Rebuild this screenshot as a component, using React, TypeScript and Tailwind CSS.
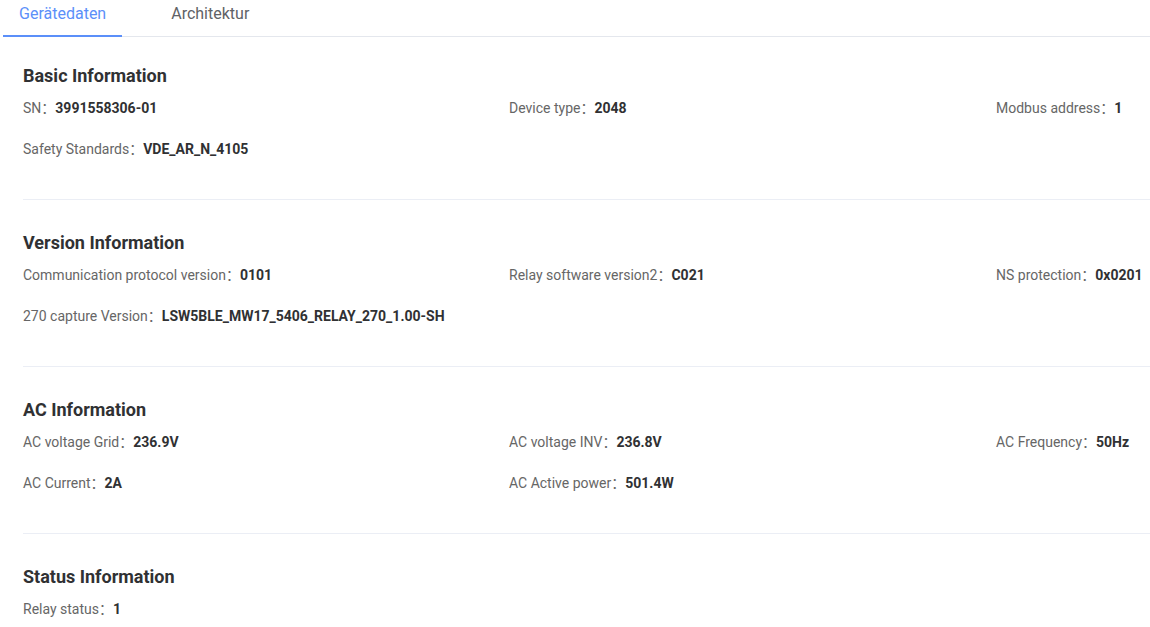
import React, { useState } from 'react';

type Field = { label: string; value: string };
type Section = { title: string; rows: Field[][] };

const sections: Section[] = [
  {
    title: 'Basic Information',
    rows: [
      [
        { label: 'SN', value: '3991558306-01' },
        { label: 'Device type', value: '2048' },
        { label: 'Modbus address', value: '1' },
      ],
      [{ label: 'Safety Standards', value: 'VDE_AR_N_4105' }],
    ],
  },
  {
    title: 'Version Information',
    rows: [
      [
        { label: 'Communication protocol version', value: '0101' },
        { label: 'Relay software version2', value: 'C021' },
        { label: 'NS protection', value: '0x0201' },
      ],
      [{ label: '270 capture Version', value: 'LSW5BLE_MW17_5406_RELAY_270_1.00-SH' }],
    ],
  },
  {
    title: 'AC Information',
    rows: [
      [
        { label: 'AC voltage Grid', value: '236.9V' },
        { label: 'AC voltage INV', value: '236.8V' },
        { label: 'AC Frequency', value: '50Hz' },
      ],
      [
        { label: 'AC Current', value: '2A' },
        { label: 'AC Active power', value: '501.4W' },
      ],
    ],
  },
  {
    title: 'Status Information',
    rows: [[{ label: 'Relay status', value: '1' }]],
  },
];

const tabs = ['Gerätedaten', 'Architektur'];

const App: React.FC = () => {
  const [active, setActive] = useState(0);

  return (
    <div
      className="w-full h-[627px] overflow-hidden bg-white"
      style={{ fontFamily: 'Roboto, "Noto Sans CJK SC", sans-serif' }}
    >
      <div className="w-[1500px]">
        {/* tabs */}
        <div className="ml-[3px] flex border-b border-[#e4e7ed]">
          {tabs.map((t, i) => (
            <button
              key={t}
              onClick={() => setActive(i)}
              className={`relative px-4 pt-[4px] pb-[12px] text-base leading-5 ${
                i === 1 ? 'ml-[33px]' : ''
              } ${active === i ? 'text-[#5b8ff9]' : 'text-[#606266]'}`}
            >
              {t}
              {active === i && (
                <span className="absolute left-0 right-0 bottom-[-1px] h-[2px] bg-[#5b8ff9]"></span>
              )}
            </button>
          ))}
        </div>

        {/* sections */}
        <div className="ml-[23px]">
          {sections.map((s, idx) => (
            <div
              key={s.title}
              className={`${idx === 0 ? 'pt-[27px]' : 'pt-[31px]'} pb-[40px] ${
                idx < sections.length - 1 ? 'border-b border-[#ebeef5]' : ''
              }`}
            >
              <h3 className="text-lg leading-6 font-bold text-[#303133]">{s.title}</h3>
              <div className="mt-[10px] flex flex-col gap-[21px]">
                {s.rows.map((row, r) => (
                  <div key={r} className="grid grid-cols-[486px_487px_487px]">
                    {row.map((f) => (
                      <div key={f.label} className="text-sm leading-5 whitespace-nowrap">
                        <span className="text-[#666666]">{f.label}：</span>
                        <span className="font-bold text-[#303133]">{f.value}</span>
                      </div>
                    ))}
                  </div>
                ))}
              </div>
            </div>
          ))}
        </div>
      </div>
    </div>
  );
};

export default App;
